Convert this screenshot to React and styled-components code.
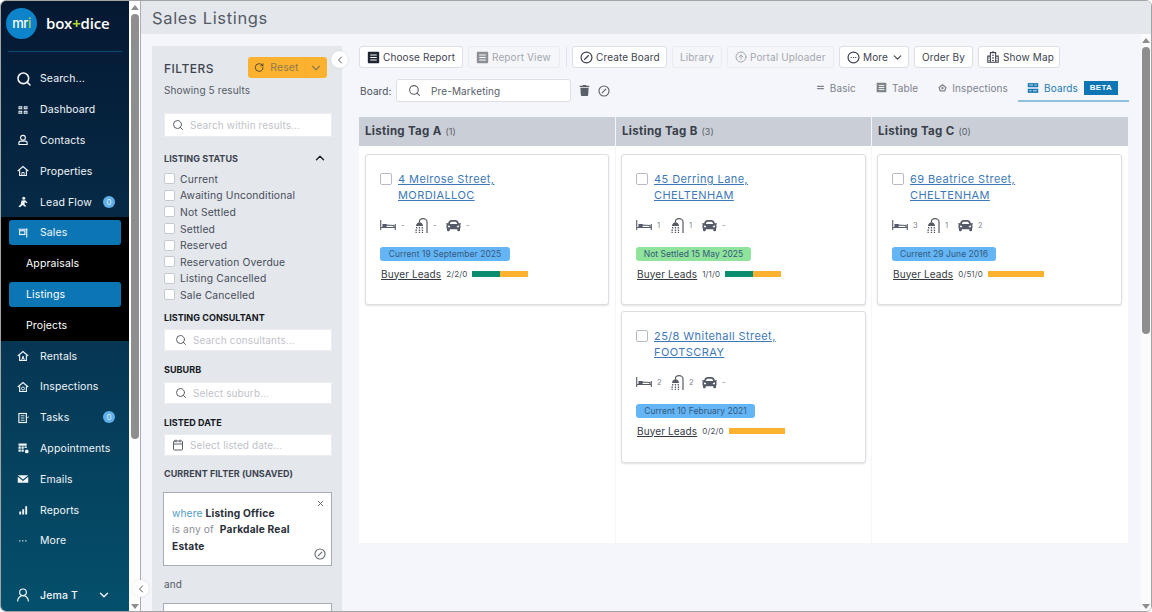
import React from 'react';
import styled, { createGlobalStyle } from 'styled-components';
import { Search, UserRound, ChevronDown, ChevronUp, ChevronLeft, Calendar, RotateCw, X, ArrowUpCircle } from 'lucide-react';
import { FaTrash, FaCar } from 'react-icons/fa';

const Global = createGlobalStyle`
  html, body { margin: 0; padding: 0; background: #fff; }
  body { font-family: "Inter", "Liberation Sans", sans-serif; }
  * { box-sizing: border-box; }
`;

const Root = styled.div`
  width: 1152px; height: 612px; display: flex; overflow: hidden; position: relative;
  border: 1px solid #a3a3a3; border-radius: 6px; background: #fff;
  font-size: 10.5px; letter-spacing: 0.12px;
`;
const Sidebar = styled.nav`
  width: 128px; flex: none; display: flex; flex-direction: column; color: #fff;
  background: linear-gradient(180deg, #051832 0%, #06324f 50%, #04506c 100%);
`;
const Brand = styled.div`
  height: 51px; margin: 0 7px; padding-bottom: 6px; display: flex; align-items: center; gap: 8px;
  border-bottom: 1.5px solid #0f4a74; flex: none;
`;
const LogoDisc = styled.div`
  width: 31px; height: 31px; border-radius: 50%; margin-left: -2px; flex: none;
  background: #0d83c9; display: flex; align-items: center; justify-content: center;
  font: 500 13px "Inter", sans-serif; color: #fff; letter-spacing: -0.5px;
  span { color: #b5d334; }
`;
const Wordmark = styled.div`
  font: 600 15px "Open Sans", sans-serif; letter-spacing: -0.2px; color: #fff; margin-left: 1px;
  span { color: #b5d334; font-weight: 700; }
`;
const NavList = styled.div`padding-top: 11.5px;`;
const NavRow = styled.div`
  height: 30.8px; display: flex; align-items: center; padding-left: 16px; position: relative;
  color: #f2f6fa;
`;
const NavIcon = styled.span`
  width: 23px; height: 16px; flex: none; display: flex; align-items: center;
`;
const SearchIconSlot = styled(NavIcon)`margin-left: -1px; width: 24px;`;
const Badge = styled.span`
  position: absolute; left: 102px; top: 9px; width: 12px; height: 12px; border-radius: 50%;
  background: #5fb0ea; color: #d9eefc; font-size: 8px; display: flex; align-items: center; justify-content: center;
`;
const SalesGroup = styled.div`background: #000;`;
const SalesRow = styled(NavRow)`
  &::before {
    content: ""; position: absolute; left: 8px; right: 8px; top: 3px; bottom: 3px;
    background: #0b76b3; border-radius: 3px;
  }
  > * { position: relative; }
`;
const SubRow = styled.div`
  height: 30.8px; display: flex; align-items: center; padding-left: 25px; color: #fff; position: relative;
  ${p => p.$active && `
    &::before { content: ""; position: absolute; left: 8px; right: 8px; top: 3px; bottom: 3px; background: #0b76b3; border-radius: 3px; }
  `}
  span { position: relative; }
`;
const NavFooter = styled.div`
  margin-top: auto; height: 30px; margin-bottom: 1px; display: flex; align-items: center; padding-left: 14px;
  color: #f2f6fa;
`;
const FooterName = styled.span`width: 57px; margin-left: 2px; font-weight: 500;`;

const ScrollTrack = styled.div`
  width: ${p => p.$w || 10}px; flex: none; background: #fbfbfb; display: flex; flex-direction: column; align-items: center;
  ${p => p.$left && 'border-right: 1px solid #a9adb8; background: #fff;'}
`;
const Arrow = styled.div`
  width: 0; height: 0; margin: 4px 0 2px; flex: none;
  border-left: 4px solid transparent; border-right: 4px solid transparent;
  ${p => p.$down ? 'border-top: 5px solid #8e8e8e;' : 'border-bottom: 5px solid #8e8e8e;'}
`;
const Thumb = styled.div`
  width: 8px; border-radius: 4px; background: #8e8e8e; height: ${p => p.$h}px; margin-top: 2px; flex: none;
`;
const Spacer = styled.div`flex: 1;`;

const Main = styled.main`flex: 1; min-width: 0; display: flex; flex-direction: column; background: #f4f6fb;`;
const Header = styled.header`
  height: 33px; flex: none; background: #e4e7ec; display: flex; align-items: center; padding-left: 11px;
  font-size: 16.5px; color: #555b66; letter-spacing: 0.65px; font-weight: 400;
`;
const Body = styled.div`flex: 1; min-height: 0; display: flex; overflow: hidden;`;
const BodyInner = styled.div`flex: 1; min-width: 0; display: flex; padding: 12px 0 0 11px; overflow: hidden;`;

const FilterPanel = styled.aside`
  width: 190px; flex: none; background: #e4e7ec; padding: 11px 11px 0 12px; position: relative; color: #4a505c;
`;
const FilterHead = styled.div`display: flex; align-items: center; justify-content: space-between; height: 21px; padding-right: 4px;`;
const FilterTitle = styled.div`font-size: 12px; letter-spacing: 0.5px; color: #3f4550; font-weight: 500; margin-top: 2px;`;
const ResetBtn = styled.div`
  width: 79px; height: 21px; background: #fdb22f; border-radius: 3px; display: flex; align-items: center;
  color: #8d7a4e; padding-left: 6px; gap: 6px; font-size: 10.5px;
`;
const ResetCaret = styled.span`margin-left: auto; width: 24px; height: 100%; display: flex; align-items: center; justify-content: center; border-left: 1px solid #f8ac2a;`;
const Showing = styled.div`margin-top: 5px; height: 14px; line-height: 14px; color: #555b66; font-size: 10px;`;
const FieldBox = styled.div`
  height: ${p => p.$h || 22}px; width: 168px; background: #fff; border-radius: 2px; margin-top: ${p => p.$mt || 0}px;
  display: flex; align-items: center; padding-left: ${p => p.$pl || 8}px; gap: ${p => p.$gap || 6}px; color: #bfc3ca; font-size: 10px;
  box-shadow: 0 0 0 1px #eaecf0 inset;
  svg { color: #5b6068; flex: none; }
`;
const SectionLabel = styled.div`
  font-size: 9px; font-weight: 700; letter-spacing: 0.05px; color: ${p => p.$soft ? '#3d4350' : '#15181e'};
  display: flex; align-items: center; justify-content: space-between; height: 12px; margin-top: ${p => p.$mt}px;
  padding-right: 4px;
`;
const StatusList = styled.div`margin-top: 6.5px; display: flex; flex-direction: column;`;
const StatusRow = styled.label`
  height: 16.6px; display: flex; align-items: center; gap: 5px; font-size: 10.3px; letter-spacing: 0.17px; color: #474d5a;
`;
const Check = styled.span`
  width: 11px; height: 11px; flex: none; background: #fff; border: 1px solid #c5c9d1; border-radius: 2px; display: block;
`;
const FilterCard = styled.div`
  margin: 12px 0 0 -1px; width: 169px; height: 74px; background: #fff; border: 1px solid #a7adb8; padding: 12px 8px 0 8px;
  position: relative; font-size: 10.2px; line-height: 16.5px; color: #2a2f39;
  b { font-weight: 700; letter-spacing: 0.2px; }
`;
const Where = styled.span`color: ${p => p.$c}; font-weight: 400;`;
const FilterClose = styled.span`position: absolute; right: 6px; top: 6px; color: #666b74; display: flex;`;
const FilterSlash = styled.span`position: absolute; right: 5px; bottom: 5px; color: #666b74; display: flex;`;
const AndLabel = styled.div`margin-top: 12px; height: 12px; font-size: 10px; color: #555b66;`;
const NextCard = styled(FilterCard)`margin-top: 13px; height: 30px;`;

const Collapse = styled.button`
  position: absolute; width: 17px; height: 17px; border-radius: 50%; border: 0; padding: 0; background: #fff;
  display: flex; align-items: center; justify-content: center; color: #555;
  box-shadow: 0 0 2px rgba(0,0,0,.15);
  left: ${p => p.$x}px; top: ${p => p.$y}px; z-index: 3;
`;

const Content = styled.section`width: 769px; margin-left: 17px; flex: none; display: flex; flex-direction: column;`;
const Toolbar = styled.div`display: flex; align-items: center; gap: 5px; height: 22px;`;
const Btn = styled.div`
  height: 22px; border: 1px solid ${p => p.$off ? '#e9ebf0' : '#dcdfe5'}; border-radius: 3px; background: ${p => p.$off ? '#f5f6fa' : '#fff'};
  color: ${p => p.$off ? '#a3a7ae' : '#3d4350'}; display: flex; align-items: center; justify-content: ${p => p.$center ? 'center' : 'flex-start'};
  padding-left: ${p => p.$center ? 0 : 7}px; gap: 3px; width: ${p => p.$w}px; flex: none; font-size: 10px;
`;
const ToolDivider = styled.div`width: 1px; height: 20px; background: #dfe2e8; margin: 0 0.5px;`;
const BoardRow = styled.div`display: flex; align-items: center; height: 23px; margin-top: 11px;`;
const BoardLabel = styled.span`width: 37px; color: #4a505c; font-size: 10px; padding-left: 1px;`;
const BoardInput = styled.div`
  width: 175px; height: 23px; border: 1px solid #dcdfe5; border-radius: 3px; background: #fff; display: flex; align-items: center;
  padding-left: 11px; gap: 10px; color: #5b6068; font-size: 10px;
  svg { color: #5b6068; }
`;
const BoardActions = styled.div`display: flex; align-items: center; gap: 8px; margin-left: 8px; color: #5b6068;`;
const Tabs = styled.div`margin-left: auto; margin-right: -1px; display: flex; align-items: stretch; height: 23px; margin-top: -1px;`;
const Tab = styled.div`
  display: flex; align-items: center; gap: 5px; color: ${p => p.$on ? '#1d7ab5' : '#7d828b'}; font-size: 10px;
  padding: 0 9px 3px; margin-left: ${p => p.$ml || 0}px;
  border-bottom: 2px solid ${p => p.$on ? '#8fc0de' : 'transparent'};
`;
const Beta = styled.span`
  background: #0b76b3; color: #fff; font: 700 8px "Liberation Sans", sans-serif; letter-spacing: 0.3px; width: 34px; height: 14px;
  display: flex; align-items: center; justify-content: center; margin-left: 1px; margin-right: 2px;
`;

const Board = styled.div`display: grid; grid-template-columns: 256px 255px 256px; column-gap: 1px; margin-top: 15px; width: 769px;`;
const ColHead = styled.div`
  height: 29px; background: #c9ced7; display: flex; align-items: center; gap: 4px; padding: 0 0 2px 6px;
  font-size: 11.5px; font-weight: 700; color: #3a3f4a; letter-spacing: 0.3px;
  small { font-size: 9px; font-weight: 400; color: #5b6068; letter-spacing: 0; margin-top: 1px; }
`;
const ColBody = styled.div`
  height: 397px; background: #fff; padding: 8px ${p => p.$pr || 6}px 0 ${p => p.$pl || 6}px; display: flex; flex-direction: column; gap: 6px;
`;
const Card = styled.article`
  height: ${p => p.$h || 151}px; background: #fff; border: 1px solid #dcdee2; border-radius: 3px; box-shadow: 0 1px 2px rgba(0,0,0,.12);
  padding: 16px 14px 0 14px; flex: none;
`;
const TitleRow = styled.div`display: flex; gap: 6px;`;
const CardCheck = styled(Check)`width: 12px; height: 12px; margin-top: 2px; border-color: #b7bcc6;`;
const Address = styled.a`
  font-size: 11px; line-height: 16px; color: #3d78b8; text-decoration: underline; letter-spacing: 0.42px; display: block; text-underline-offset: 1px;
`;
const Specs = styled.div`display: flex; align-items: center; margin-top: 14px; height: 16px; color: #555b66;`;
const Spec = styled.span`
  display: flex; align-items: center; gap: 5px; width: ${p => p.$w}px; margin-left: ${p => p.$ml || 0}px; font-size: 7.5px; color: #7d828b; flex: none;
`;
const Tag = styled.div`
  display: inline-flex; align-items: center; justify-content: center; height: 14px; width: ${p => p.$w}px; margin-top: 14px;
  background: ${p => p.$bg}; border-radius: 3px; color: #355a7c; font-size: 8.5px; letter-spacing: 0.05px;
`;
const LeadsRow = styled.div`display: flex; align-items: center; margin-top: 6px; height: 13px; padding-left: 1px;`;
const LeadsLink = styled.a`font-size: 10px; color: #343943; text-decoration: underline; text-underline-offset: 1px;`;
const LeadsCount = styled.span`font-size: 8px; color: #4a505c; margin-left: 5px; margin-right: 5px;`;
const LeadBar = styled.div`width: 56px; height: 6px; display: flex; background: #fdb22f; margin-top: 1px;`;
const LeadFill = styled.div`width: 50%; background: #0a8d6f;`;

/* Icons */
const S = ({ w = 12, h = 12, vb = '0 0 16 16', children, ...r }) => (
  <svg width={w} height={h} viewBox={vb} fill="none" stroke="currentColor" strokeWidth="1.5" {...r}>{children}</svg>
);
const Grid = () => <S><path fill="currentColor" stroke="none" d="M2 3h5v4H2zM9 3h5v4H9zM2 9h5v4H2zM9 9h5v4H9z" /><path stroke="#072544" strokeWidth="1" d="M3 5h3M10 5h3M3 11h3M10 11h3" /></S>;
const Person = () => <S><circle cx="8" cy="5" r="3.2" /><path d="M2.5 14v-2c0-1.5 1.5-2.5 3-2.5h5c1.5 0 3 1 3 2.500V14z" /></S>;
const HomeI = ({ v }) => (
  <S>
    <path d="M1 8l7-6 7 6" /><path d="M3.500 7v7h9V7" />
    {v === 'a' && <path d="M6 14l2-6 2 6M6.800 11.500h2.400" strokeWidth="1.200" />}
    {v === 'i' && <circle cx="8" cy="10" r="2" strokeWidth="1.200" />}
    {!v && <path d="M6.500 14v-4h3v4" strokeWidth="1.200" />}
  </S>
);
const Flow = () => <S><circle cx="9" cy="3" r="2" fill="currentColor" stroke="none" /><path fill="currentColor" stroke="none" d="M6 6l5-.5 3 3-1 1-2.500-1.500-.5 3 2 2-1 1.500-3.500-2.500L4 15l-2-1 3-3z" /></S>;
const Sign = () => <S><path d="M2 3h12M13 2v12" /><rect x="3.500" y="5" width="7" height="5" strokeWidth="1.500" /></S>;
const Tasks = () => <S><rect x="2.500" y="2" width="10" height="12" strokeWidth="1.500" /><path d="M5 5h5M5 8h5M5 11h5" strokeWidth="1.200" /><path d="M12 6l2 2 1.500-2" strokeWidth="1.200" /></S>;
const Appt = () => <S><path fill="currentColor" stroke="none" d="M2 2h11v3H2zM2 6h3v3H2zM6 6h3v3H6zM2 10h3v3H2zM6 10h3v3H6zM10 6h3v2h-3z" /><circle cx="13" cy="12.500" r="2.500" fill="currentColor" stroke="none" /></S>;
const Mail = () => <S><path fill="currentColor" stroke="none" d="M1 3h14L8 8.500zM1 5l7 5.500L15 5v8H1z" /></S>;
const Bars = () => <S><path fill="currentColor" stroke="none" d="M3 10h2.500v4H3zM7 7h2.500v7H7zM11 3h2.500v11H11z" /></S>;
const Dots = () => <S><path fill="currentColor" stroke="none" d="M3 7h1.500v1.500H3zM7 7h1.500v1.500H7zM11 7h1.500v1.500H11z" /></S>;
const Slash = ({ size = 13 }) => <S w={size} h={size}><circle cx="8" cy="8" r="6.700" /><path d="M5.200 10.800L10.800 5.200" /></S>;
const ReportI = ({ bg = '#1e2733', size = 13 }) => <svg width={size} height={size} viewBox="0 0 16 16"><rect x="1" y="1" width="14" height="14" rx="1" fill={bg} /><path d="M4 5h8M4 8h8M4 11h8" stroke="#fff" strokeWidth="1.300" /></svg>;
const MoreI = () => <S w={13} h={13}><circle cx="8" cy="8" r="6.700" /><path d="M4.500 8h1.500M7.300 8h1.500M10 8h1.500" /></S>;
const MapI = () => <S w={14} h={14} strokeWidth="1.200"><path d="M2 14V7h3V3h6v4h3v7z" /><path d="M5 7v7M11 7v7M8 1v2M7 6h2M7 9h2M7 12h2M3 9.500h1M3 12h1M12 9.500h1M12 12h1" /></S>;
const BasicI = () => <S w={9} h={9}><path d="M2 6h12M2 10h12" strokeWidth="1.800" /></S>;
const InspectI = () => <S w={9} h={9} strokeWidth="2.200"><path d="M2 8l6-5 6 5-2 6H4z" /><circle cx="8" cy="9" r="1" /></S>;
const BoardsI = () => <S w={12} h={12}><rect x="1" y="1.500" width="14" height="5.500" fill="currentColor" stroke="none" /><rect x="1" y="9" width="14" height="5.500" fill="currentColor" stroke="none" /><path d="M3 4h5M10 4h3M3 11.700h3M8 11.700h5" stroke="#fff" strokeWidth="1" /></S>;
const Bed = () => <svg width="16" height="10" viewBox="0 0 16 10" fill="none" stroke="#555b66" strokeWidth="1.100"><path d="M.700 0v10M15.300 4v6M.700 7.500h14.600" /><path d="M3 7V4.500h3V7" fill="#555b66" /><path d="M6 6V5L14 5.500v2" /></svg>;
const Shower = () => <svg width="13" height="15" viewBox="0 0 13 15" fill="none"><path d="M4.500 4.500V3C4.500 1.500 6 .700 8 .700s4 1.200 4 3V15" stroke="#555b66" strokeWidth="1.200" /><path d="M1 8C1 5.500 2.800 4.200 4.500 4.200S8 5.500 8 8z" fill="#555b66" /><path d="M1 9.800h1.300M3.800 9.800h1.300M6.600 9.800h1.300M.5 12.200h1.300M3.800 12.200h1.300M6.800 12.200h1.300M.5 14.500h1.300M3.800 14.500h1.300M6.800 14.500h1.300" stroke="#555b66" strokeWidth="1.500" /></svg>;

const Specsline = ({ b, s, c }) => (
  <Specs>
    <Spec $w={27}><Bed /><span>{b}</span></Spec>
    <Spec $w={31} $ml={8}><Shower /><span>{s}</span></Spec>
    <Spec $w={30}><FaCar size={15} color="#555b66" /><span>{c}</span></Spec>
  </Specs>
);

const ListingCard = ({ a, b, s1, s2, s3, tag, tagW, tagBg = '#64b5f6', leads, half, h }) => (
  <Card $h={h}>
    <TitleRow>
      <CardCheck />
      <div>
        <Address>{a}</Address>
        <Address>{b}</Address>
      </div>
    </TitleRow>
    <Specsline b={s1} s={s2} c={s3} />
    <Tag $w={tagW} $bg={tagBg}>{tag}</Tag>
    <LeadsRow>
      <LeadsLink>Buyer Leads</LeadsLink>
      <LeadsCount>{leads}</LeadsCount>
      <LeadBar>{half && <LeadFill />}</LeadBar>
    </LeadsRow>
  </Card>
);

const top = [
  ['Dashboard', <Grid />], ['Contacts', <Person />], ['Properties', <HomeI />], ['Lead Flow', <Flow />, true],
];
const bottom = [
  ['Rentals', <HomeI v="a" />], ['Inspections', <HomeI v="i" />], ['Tasks', <Tasks />, true], ['Appointments', <Appt />],
  ['Emails', <Mail />], ['Reports', <Bars />], ['More', <Dots />],
];
const statuses = ['Current', 'Awaiting Unconditional', 'Not Settled', 'Settled', 'Reserved', 'Reservation Overdue', 'Listing Cancelled', 'Sale Cancelled'];

const Row = ({ item }) => (
  <NavRow>
    <NavIcon>{item[1]}</NavIcon>
    <span>{item[0]}</span>
    {item[2] && <Badge>0</Badge>}
  </NavRow>
);

export default function App() {
  return (
    <Root>
      <Global />
      <Sidebar>
        <Brand>
          <LogoDisc>mr<span>i</span></LogoDisc>
          <Wordmark>box<span>+</span>dice</Wordmark>
        </Brand>
        <NavList>
          <NavRow><SearchIconSlot><Search size={16} strokeWidth={2.4} /></SearchIconSlot><span>Search...</span></NavRow>
          {top.map(i => <Row key={i[0]} item={i} />)}
          <SalesGroup>
            <SalesRow><NavIcon><Sign /></NavIcon><span>Sales</span></SalesRow>
            <SubRow><span>Appraisals</span></SubRow>
            <SubRow $active><span>Listings</span></SubRow>
            <SubRow><span>Projects</span></SubRow>
          </SalesGroup>
          {bottom.map(i => <Row key={i[0]} item={i} />)}
        </NavList>
        <NavFooter>
          <NavIcon><UserRound size={16} strokeWidth={1.8} /></NavIcon>
          <FooterName>Jema T</FooterName>
          <ChevronDown size={14} strokeWidth={2.4} />
        </NavFooter>
      </Sidebar>
      <ScrollTrack $left $w={12}>
        <Arrow />
        <Thumb $h={425} />
        <Spacer />
        <Arrow $down />
      </ScrollTrack>
      <Collapse $x={131} $y={579}><ChevronLeft size={12} strokeWidth={2} /></Collapse>
      <Main>
        <Header>Sales Listings</Header>
        <Body>
          <BodyInner>
            <FilterPanel>
              <Collapse $x={179} $y={5}><ChevronLeft size={12} strokeWidth={2} /></Collapse>
              <FilterHead>
                <FilterTitle>FILTERS</FilterTitle>
                <ResetBtn>
                  <RotateCw size={11} color="#3e3a2c" strokeWidth={2} />
                  <span>Reset</span>
                  <ResetCaret><ChevronDown size={14} color="#8d7a4e" /></ResetCaret>
                </ResetBtn>
              </FilterHead>
              <Showing>Showing 5 results</Showing>
              <FieldBox $h={24} $mt={16}><Search size={12} />Search within results...</FieldBox>
              <SectionLabel $mt={15} $soft>LISTING STATUS <ChevronUp size={14} color="#15181e" strokeWidth={2.2} /></SectionLabel>
              <StatusList>
                {statuses.map(s => <StatusRow key={s}><Check />{s}</StatusRow>)}
              </StatusList>
              <SectionLabel $mt={8.5}>LISTING CONSULTANT</SectionLabel>
              <FieldBox $mt={5} $pl={11}><Search size={12} />Search consultants...</FieldBox>
              <SectionLabel $mt={13}>SUBURB</SectionLabel>
              <FieldBox $mt={6} $pl={11}><Search size={12} />Select suburb...</FieldBox>
              <SectionLabel $mt={13}>LISTED DATE</SectionLabel>
              <FieldBox $mt={5}><Calendar size={12} />Select listed date...</FieldBox>
              <SectionLabel $mt={12} $soft>CURRENT FILTER (UNSAVED)</SectionLabel>
              <FilterCard>
                <FilterClose><X size={9} strokeWidth={2.5} /></FilterClose>
                <Where $c="#4f9cc9">where </Where><b>Listing Office</b><br />
                <Where $c="#8a8e96">is any of </Where>&nbsp;<b>Parkdale Real</b><br />
                <b>Estate</b>
                <FilterSlash><Slash size={12} /></FilterSlash>
              </FilterCard>
              <AndLabel>and</AndLabel>
              <NextCard />
            </FilterPanel>
            <Content>
              <Toolbar>
                <Btn $w={104}><ReportI />Choose Report</Btn>
                <Btn $w={92} $off><ReportI bg="#8b8f96" />Report View</Btn>
                <ToolDivider />
                <Btn $w={95}><Slash />Create Board</Btn>
                <Btn $w={50} $off $center>Library</Btn>
                <Btn $w={107} $off><ArrowUpCircle size={12} />Portal Uploader</Btn>
                <Btn $w={70}><MoreI />More<ChevronDown size={13} strokeWidth={2} /></Btn>
                <Btn $w={59} $center>Order By</Btn>
                <Btn $w={82}><MapI />Show Map</Btn>
              </Toolbar>
              <BoardRow>
                <BoardLabel>Board:</BoardLabel>
                <BoardInput><Search size={13} />Pre-Marketing</BoardInput>
                <BoardActions><FaTrash size={11} /><Slash size={12} /></BoardActions>
                <Tabs>
                  <Tab><BasicI />Basic</Tab>
                  <Tab $ml={2}><ReportI bg="#7d828b" size={11} />Table</Tab>
                  <Tab $ml={2}><InspectI />Inspections</Tab>
                  <Tab $on $ml={1}><BoardsI />Boards<Beta>BETA</Beta></Tab>
                </Tabs>
              </BoardRow>
              <Board>
                <div>
                  <ColHead>Listing Tag A <small>(1)</small></ColHead>
                  <ColBody>
                    <ListingCard a="4 Melrose Street," b="MORDIALLOC" s1="-" s2="-" s3="-" tag="Current 19 September 2025" tagW={130} leads="2/2/0" half />
                  </ColBody>
                </div>
                <div>
                  <ColHead>Listing Tag B <small>(3)</small></ColHead>
                  <ColBody $pr={5} $pl={5}>
                    <ListingCard a="45 Derring Lane," b="CHELTENHAM" s1="1" s2="1" s3="-" tag="Not Settled 15 May 2025" tagW={115} tagBg="#8fe39b" leads="1/1/0" half />
                    <ListingCard a="25/8 Whitehall Street," b="FOOTSCRAY" s1="2" s2="2" s3="-" tag="Current 10 February 2021" tagW={119} leads="0/2/0" h={152} />
                  </ColBody>
                </div>
                <div>
                  <ColHead>Listing Tag C <small>(0)</small></ColHead>
                  <ColBody $pl={5}>
                    <ListingCard a="69 Beatrice Street," b="CHELTENHAM" s1="3" s2="1" s3="2" tag="Current 29 June 2016" tagW={104} leads="0/51/0" />
                  </ColBody>
                </div>
              </Board>
            </Content>
          </BodyInner>
          <ScrollTrack>
            <Arrow />
            <Thumb $h={287} />
            <Spacer />
            <Arrow $down />
          </ScrollTrack>
        </Body>
      </Main>
    </Root>
  );
}
